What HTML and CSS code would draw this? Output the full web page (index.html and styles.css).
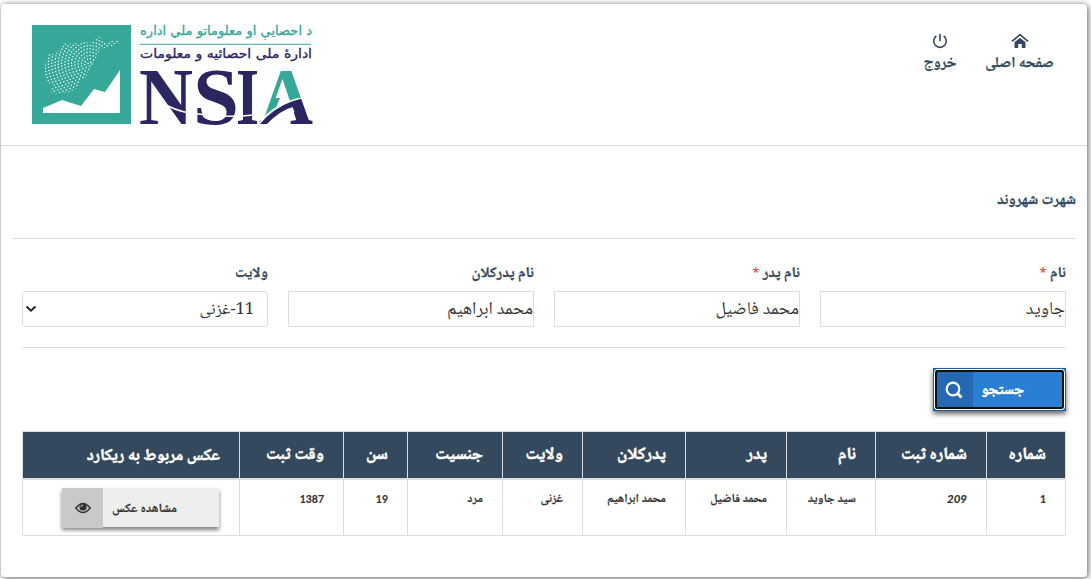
FILE: index.html
```html
<!DOCTYPE html>
<html lang="fa" dir="rtl">
<head>
<meta charset="utf-8">
<title>NSIA</title>
<link rel="stylesheet" href="styles.css">
</head>
<body>
<div class="card">
  <header class="header">
    <nav class="nav">
      <a class="nav-item home">
        <svg width="18" height="16" viewBox="0 0 18 16"><path d="M1 8.300 9 1.700l8 6.600" fill="none" stroke="#34495e" stroke-width="1.700"/><path d="M3.500 9.200 9 4.800l5.500 4.400V15h-3.700v-4H7.200v4H3.500z" fill="#34495e"/></svg>
        <span>صفحه اصلی</span>
      </a>
      <a class="nav-item exit">
        <svg width="16" height="16" viewBox="0 0 16 16" fill="none" stroke="#34495e" stroke-width="1.600"><path d="M4.300 3A6.300 6.300 0 1 0 11.700 3M8 .8v7.400"/></svg>
        <span>خروج</span>
      </a>
    </nav>
    <svg class="logo" dir="ltr" width="282" height="102" viewBox="31 24 282 102">
      <defs>
        <clipPath id="map"><path d="M46 60 49 53 55 54 61 48 65 43 72 44 78 43 84 42 90 43 95 39 100 36 102 40 105 43 111 41 119 39 120 43 113 46 105 48 99 49 99 53 96 59 92 67 88 71 86 78 80 80 77 88 70 92 61 94 51 93 53 86 46 81 44 71z"/></clipPath>
        <linearGradient id="two-tone" gradientUnits="userSpaceOnUse" x1="284" y1="98" x2="287" y2="104"><stop offset=".95" stop-color="#35a899"/><stop offset=".96" stop-color="#2b2560"/></linearGradient>
      </defs>
      <rect x="32" y="25" width="99" height="99" fill="#35a899"/>
      <g class="dots" id="rings" clip-path="url(#map)"></g>
      <path d="M43 108 62 100 81 106 94 89 105 92 120 70V113H43z" fill="#fff"/>
      <text class="logo-text teal" x="312" y="35" textLength="172" lengthAdjust="spacingAndGlyphs">د احصايې او معلوماتو ملي اداره</text>
      <path d="M140 44.300H311" stroke="#35a899"/>
      <text class="logo-text navy" x="312" y="58" textLength="172" lengthAdjust="spacingAndGlyphs">ادارۀ ملی احصائیه و معلومات</text>
      <g class="brand">
        <text x="139" y="124" textLength="54" lengthAdjust="spacingAndGlyphs">N</text>
        <text x="193" y="124" textLength="46" lengthAdjust="spacingAndGlyphs">S</text>
        <text x="236" y="124" textLength="23" lengthAdjust="spacingAndGlyphs">I</text>
        <text x="259" y="124" textLength="54" lengthAdjust="spacingAndGlyphs" fill="url(#two-tone)">A</text>
      </g>
      <path d="M277.500 99h12l5 13-10 12h-26z" fill="#fff"/>
      <path d="M274.500 98h5.500l-5 12-11 8z" fill="#35a899"/>
      <path d="M260 124q13-16 35-24l6 13-5-7q-16 4-29 18z" fill="#2b2560"/>
      <path d="M168 106q14 7 30 8 30 4 55 1M262 120q14-16 39-22" fill="none" stroke="#fff" stroke-width="1.500"/>
    </svg>
  </header>
  <main class="main">
    <h1 class="title">شهرت شهروند</h1>
    <form class="form">
      <div class="fields">
        <div class="field"><label>نام <b>*</b></label><div class="input"><span>جاوید</span></div></div>
        <div class="field"><label>نام پدر <b>*</b></label><div class="input"><span>محمد فاضیل</span></div></div>
        <div class="field"><label>نام پدرکلان</label><div class="input"><span>محمد ابراهیم</span></div></div>
        <div class="field"><label>ولایت</label><div class="input select"><span>11-غزنی</span><svg width="12" height="8" viewBox="0 0 12 8"><path d="M1.500 1.500 6 5.700l4.500-4.200" fill="none" stroke="#222" stroke-width="2"/></svg></div></div>
      </div>
      <button type="button" class="search"><span class="search-label">جستجو</span><span class="search-icon"><svg width="20" height="20" viewBox="0 0 20 20" fill="none" stroke="#fff"><circle cx="9" cy="9" r="6.300" stroke-width="2.200"/><path d="m13.500 13.500 4 4" stroke-width="3"/></svg></span></button>
    </form>
    <table class="records">
      <colgroup><col class="c1"><col class="c2"><col class="c3"><col class="c4"><col class="c5"><col class="c6"><col class="c7"><col class="c8"><col class="c9"><col class="c10"></colgroup>
      <thead><tr><th>شماره</th><th>شماره ثبت</th><th>نام</th><th>پدر</th><th>پدرکلان</th><th>ولایت</th><th>جنسیت</th><th>سن</th><th>وقت ثبت</th><th class="wide">عکس مربوط به ریکارد</th></tr></thead>
      <tbody><tr><td class="num">1</td><td class="num"><i>209</i></td><td>سید جاوید</td><td>محمد فاضیل</td><td>محمد ابراهیم</td><td>غزنی</td><td>مرد</td><td class="num">19</td><td class="num">1387</td><td class="photo"><button type="button" class="view"><span class="view-label">مشاهده عکس</span><span class="view-icon"><svg width="16" height="12" viewBox="0 0 16 12"><path d="M.8 6Q8-3 15.200 6 8 15 .8 6z" fill="none" stroke="#333" stroke-width="1.400"/><circle cx="8" cy="5" r="3.600" fill="#333"/><path d="M6 5a2 2 0 0 1 2-2" fill="none" stroke="#ccc"/></svg></span></button></td></tr></tbody>
    </table>
  </main>
</div>
<script src="rings.js"></script>
</body>
</html>
```
FILE: rings.js
```js
// Concentric rings of dots, clipped to the country outline.
const rings = document.getElementById('rings');
for (let r = 2; r < 70; r += 3.3) {
  const c = document.createElementNS('http://www.w3.org/2000/svg', 'circle');
  c.setAttribute('cx', 90);
  c.setAttribute('cy', 64);
  c.setAttribute('r', r);
  rings.appendChild(c);
}
```
FILE: styles.css
```css
* { box-sizing: border-box; }
body { margin: 0; height: 579px; overflow: hidden; background: #fff; color: #333; font-family: "Noto Naskh Arabic", "DejaVu Sans", sans-serif; padding: 4px 4px 2px 1px; }
.card { height: 573px; background: #fff; border-radius: 4px; box-shadow: 1px 1px 6px rgba(0,0,0,.65); }
.header { height: 142px; border-bottom: 1px solid #ddd; display: flex; justify-content: space-between; padding: 20px 33px 0 30px; }
.logo { overflow: visible; }
.nav { display: flex; color: #34495e; font-weight: bold; font-size: 15px; line-height: 24px; gap: 29px; padding-top: 9px; -webkit-text-stroke: .25px; }
.nav-item { display: flex; flex-direction: column; align-items: center; gap: 3px; white-space: nowrap; }
.home { width: 69px; }
.exit { width: 32px; }
.dots circle { fill: none; stroke: #fff; stroke-width: 1.5; stroke-linecap: round; stroke-dasharray: 0 3.1; }
.logo-text { font: 13px "DejaVu Sans", sans-serif; direction: rtl; stroke-width: .3px; }
.teal { fill: #35a899; stroke: #35a899; }
.navy { fill: #2b2560; stroke: #2b2560; }
.brand { font: bold 81px "Liberation Serif", serif; fill: #2b2560; direction: ltr; }
.main { padding: 0 11px; }
.title { margin: 0; height: 93px; border-bottom: 1px solid #ddd; padding-top: 44px; font-size: 15px; line-height: 22px; color: #34495e; -webkit-text-stroke: .25px; }
.form { margin: 0 10px; }
.fields { display: grid; grid-template-columns: repeat(4, 246px); gap: 20px; height: 109px; border-bottom: 1px solid #ddd; padding-top: 22px; }
.field label { display: block; height: 30px; line-height: 26px; font-size: 15px; font-weight: bold; color: #34495e; -webkit-text-stroke: .25px; }
.field b { color: #e22; font: 13px/10px "Open Sans", sans-serif; -webkit-text-stroke: 0; }
.input { height: 36px; border: 1px solid #ddd; line-height: 37px; font-size: 18px; white-space: nowrap; }
.select { display: flex; align-items: center; justify-content: space-between; border-radius: 3px; padding: 0 13px 0 2px; }
.select span { font-size: 16.500px; padding-top: 2px; }
.search { position: relative; display: flex; margin: 20px 0 0; width: 133px; height: 43px; padding: 0; border: 1px solid #1d5d9f; background: #2a7fd5; box-shadow: 0 3px 5px rgba(0,0,0,.6); color: #fff; }
.search::after { content: ""; position: absolute; inset: 1px; border: 2px solid #111; border-radius: 3px; box-shadow: 0 0 0 1px #fff; }
.search-label { flex: 1; text-align: right; padding-right: 41px; font: bold 15px/44px "Noto Naskh Arabic", serif; -webkit-text-stroke: .4px; }
.search-icon { width: 39px; height: 100%; background: #2469b1; display: flex; align-items: center; justify-content: center; }
.records { margin: 20px 10px 0; width: 1044px; border-collapse: collapse; table-layout: fixed; }
.c1 { width: 79px; } .c2 { width: 111px; } .c3 { width: 89px; } .c4 { width: 101px; } .c5 { width: 103px; }
.c6 { width: 80px; } .c7 { width: 95px; } .c8 { width: 64px; } .c9 { width: 104px; } .c10 { width: 217px; }
.records th { height: 47px; background: #34495e; color: #fff; border: 1px solid #ddd; border-bottom-width: 2px; text-align: right; padding: 3px 19px 0; font-size: 17px; line-height: 30px; white-space: nowrap; -webkit-text-stroke: .5px; }
.records .wide { font-size: 16.4px; }
.records td { height: 57px; border: 1px solid #ddd; vertical-align: top; padding: 8px 19px 0; font-size: 12px; font-weight: bold; line-height: 24px; white-space: nowrap; -webkit-text-stroke: .15px; }
.records .num { font-family: Lato, sans-serif; font-size: 10.500px; line-height: 22px; }
.records .num i { font-size: 11.500px; }
.records .photo { padding-right: 20px; }
.view { display: flex; width: 157px; height: 39px; padding: 0; border: 0; background: #eee; box-shadow: 0 3px 4px rgba(0,0,0,.5); color: #333; }
.view-label { flex: 1; text-align: right; padding-right: 42px; font: bold 12.700px/42px "Noto Naskh Arabic", serif; }
.view-icon { width: 41px; height: 40px; background: #c9c9c9; display: flex; align-items: center; justify-content: center; }
```
